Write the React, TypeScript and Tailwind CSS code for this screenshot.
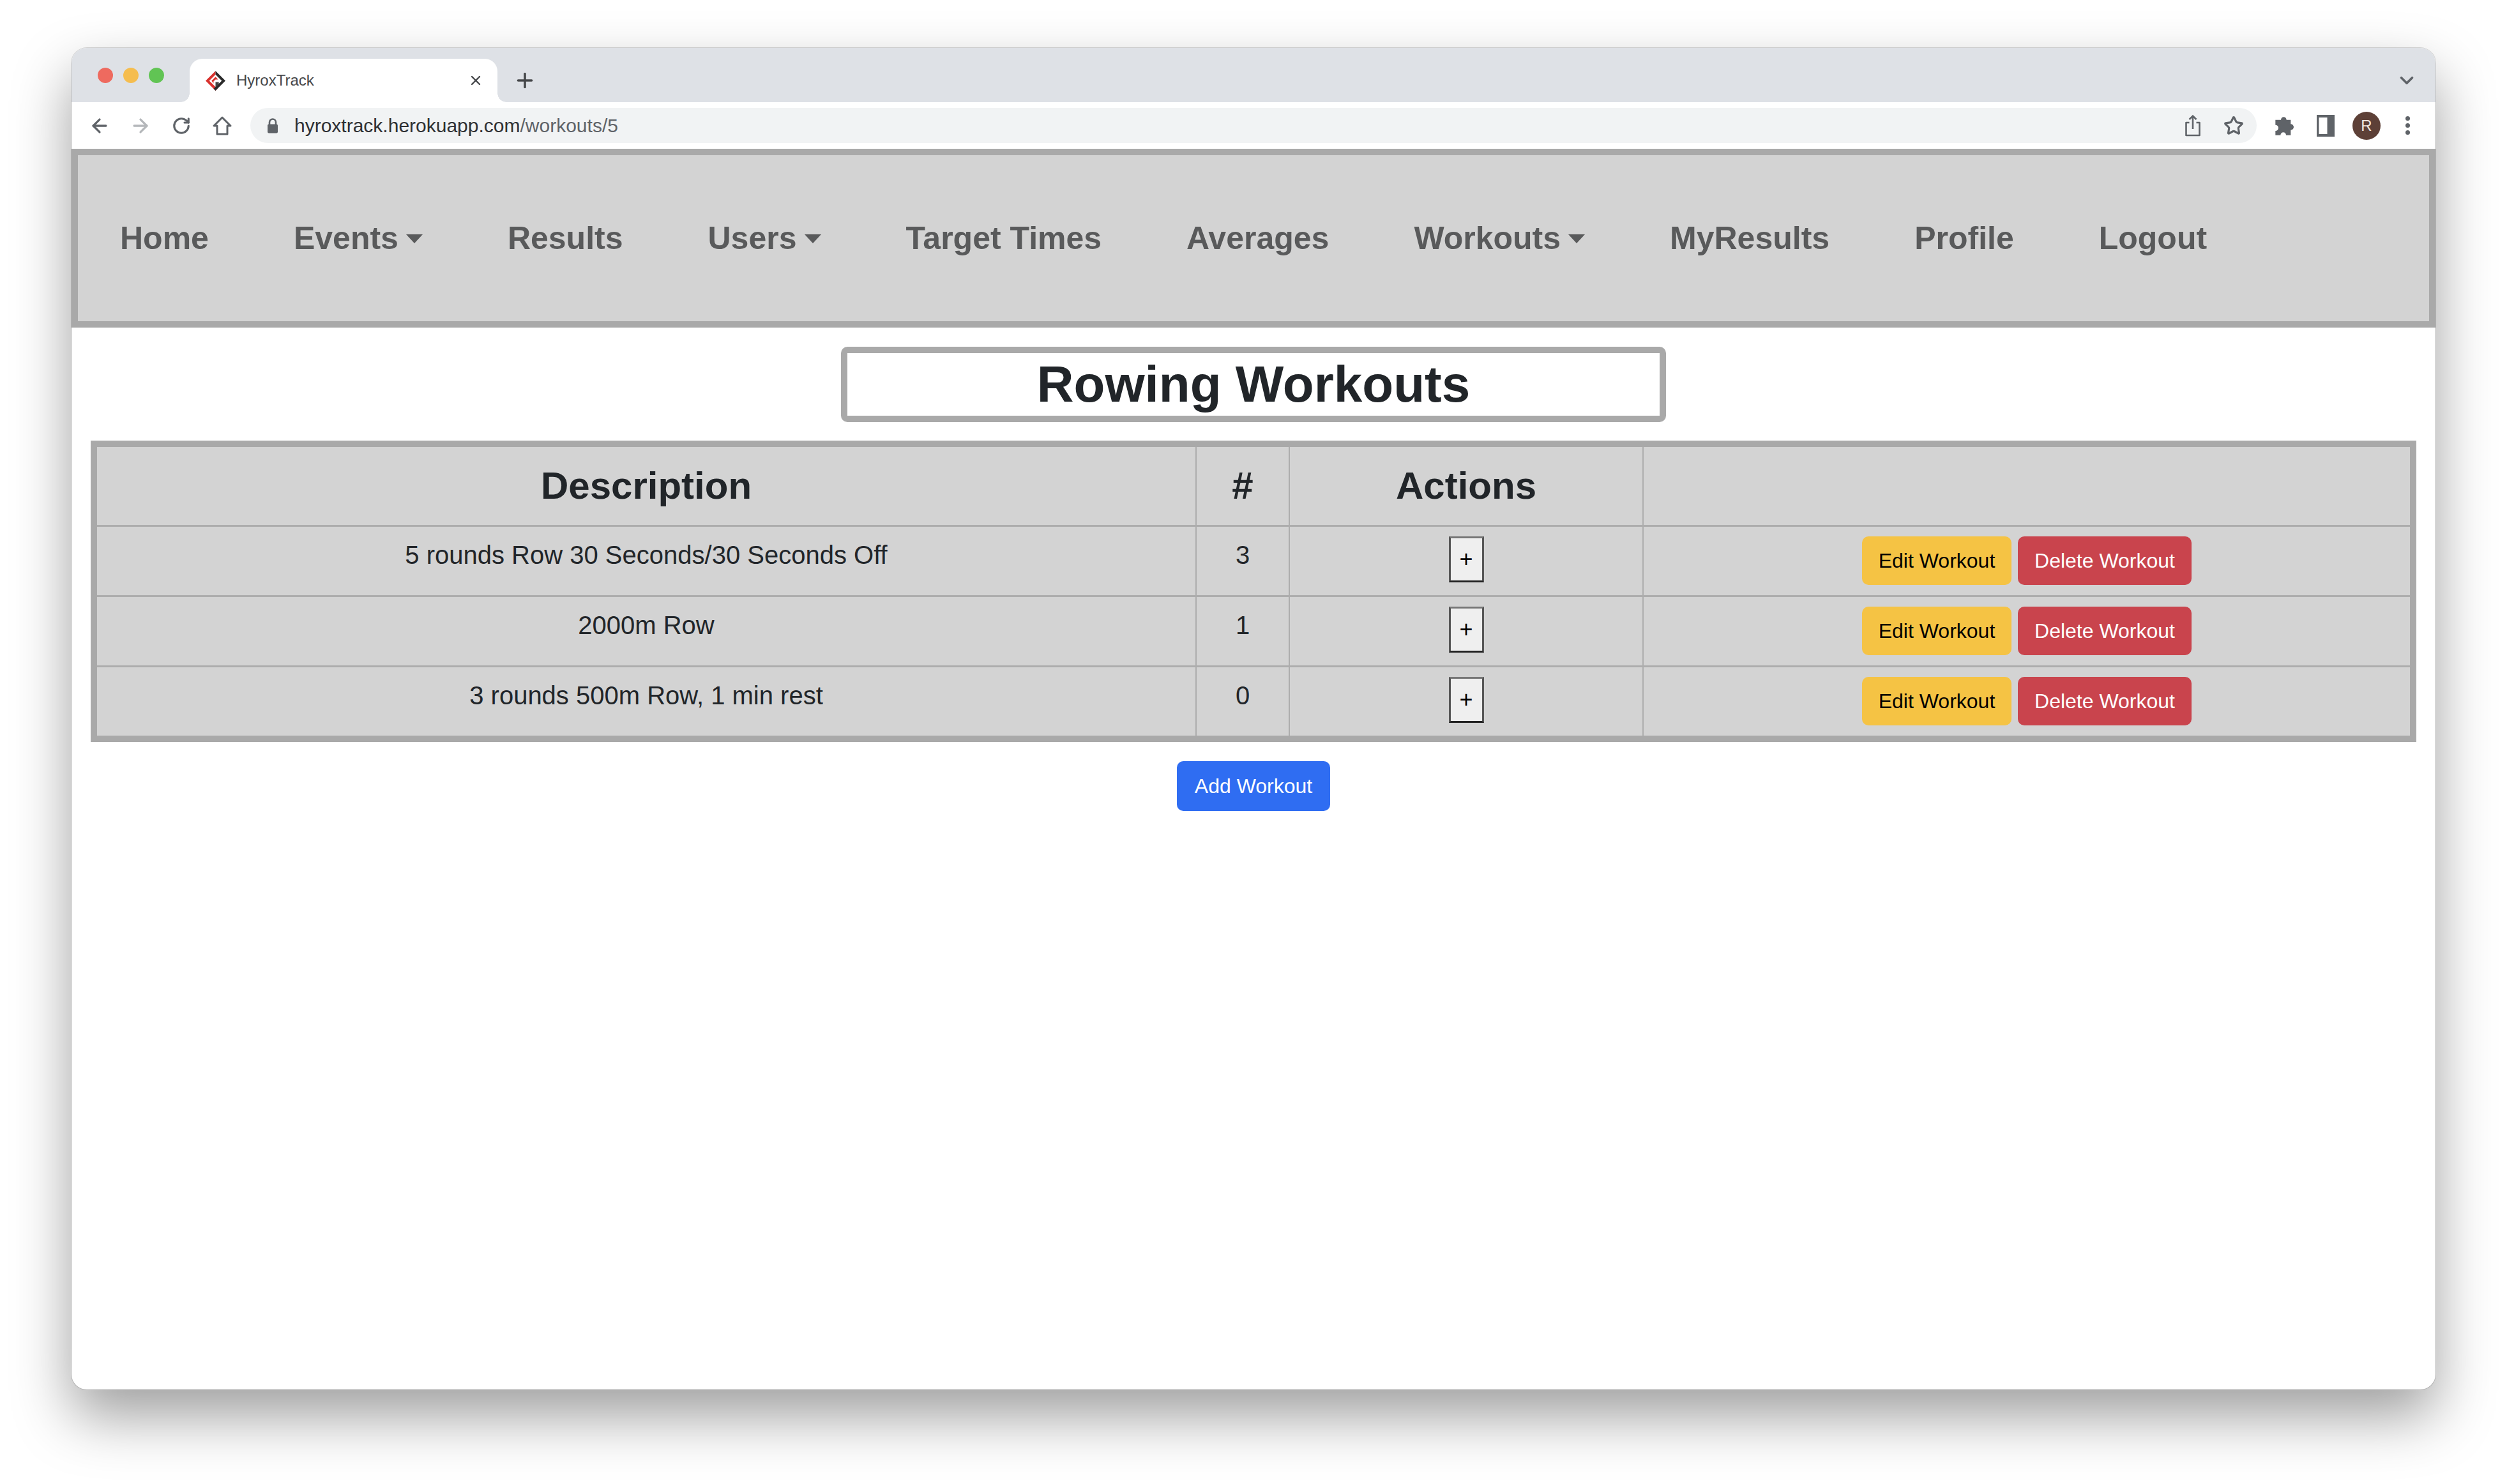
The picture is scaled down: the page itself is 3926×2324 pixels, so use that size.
import { ArrowLeft, ArrowRight, RotateCw, Plus, X, ChevronDown, Star } from "lucide-react";

const navItems = [
  { label: "Home" },
  { label: "Events", caret: true },
  { label: "Results" },
  { label: "Users", caret: true },
  { label: "Target Times" },
  { label: "Averages" },
  { label: "Workouts", caret: true },
  { label: "MyResults" },
  { label: "Profile" },
  { label: "Logout" },
];

const workouts = [
  { description: "5 rounds Row 30 Seconds/30 Seconds Off", count: 3 },
  { description: "2000m Row", count: 1 },
  { description: "3 rounds 500m Row, 1 min rest", count: 0 },
];

const Logo = () => (
  <svg width="33" height="33" viewBox="0 0 32 32" className="shrink-0">
    <path d="M16 1 L1 16 L16 31 L19 28 L6.5 16 L16 6.5 Z" fill="#d9322e" />
    <path d="M16 1 L31 16 L16 31 L13 28 L25.5 16 L16 6.5 Z" fill="#2b2b2b" />
    <path d="M10 16 L16 10 L20 14 L16 14 L13 17 L13 20 Z" fill="#d9322e" />
    <path d="M16 18 L21 18 L21 21 L16 26 Z" fill="#444" />
  </svg>
);

const ToolbarIcon = ({ children }: { children: React.ReactNode }) => (
  <div className="flex h-10 w-10 shrink-0 items-center justify-center">{children}</div>
);

const App = () => {
  return (
    <div className="min-h-[2324px] w-[3926px] bg-white px-[112px] pb-[148px] pt-[75px] text-[#212529] [font-family:'Liberation_Sans',sans-serif]">
      <div className="h-[2101px] overflow-hidden rounded-[24px] bg-white shadow-[0_42px_90px_rgba(0,0,0,0.38),0_0_0_1px_rgba(0,0,0,0.14)]">
        {/* Tab strip */}
        <div className="flex h-[85px] items-end bg-[#dee1e6] pl-[41px] pr-[28px]">
          <div className="mb-[30px] flex gap-4 self-end">
            <span className="h-6 w-6 rounded-full bg-[#ee6a5f]" />
            <span className="h-6 w-6 rounded-full bg-[#f5bd4f]" />
            <span className="h-6 w-6 rounded-full bg-[#61c454]" />
          </div>
          <div className="relative ml-[40px] flex h-[68px] w-[482px] items-center rounded-t-[20px] bg-white pl-[24px] pr-[22px]">
            <span className="absolute bottom-0 left-[-14px] h-[14px] w-[14px] bg-[radial-gradient(circle_at_0_0,transparent_13.5px,white_14px)]" />
            <span className="absolute bottom-0 right-[-14px] h-[14px] w-[14px] bg-[radial-gradient(circle_at_100%_0,transparent_13.5px,white_14px)]" />
            <Logo />
            <span className="ml-[16px] text-[24px] text-[#45474a]">HyroxTrack</span>
            <X className="ml-auto text-[#45474a]" size={24} strokeWidth={2.4} />
          </div>
          <Plus className="mb-[16px] ml-[25px] text-[#45474a]" size={36} strokeWidth={2.4} />
          <ChevronDown className="mb-[17px] ml-auto text-[#5f6368]" size={34} strokeWidth={2.6} />
        </div>

        {/* Address bar */}
        <div className="flex h-[73px] items-center gap-6 bg-white pl-[24px] pr-6">
          <ToolbarIcon>
            <ArrowLeft className="text-[#5f6368]" size={34} strokeWidth={2.3} />
          </ToolbarIcon>
          <ToolbarIcon>
            <ArrowRight className="text-[#b4b7ba]" size={34} strokeWidth={2.3} />
          </ToolbarIcon>
          <ToolbarIcon>
            <RotateCw className="text-[#5f6368]" size={30} strokeWidth={2.5} />
          </ToolbarIcon>
          <ToolbarIcon>
            <svg width="34" height="34" viewBox="0 0 34 34" fill="none" stroke="#5f6368" strokeWidth="3">
              <path d="M17 4 L4 17 H9 V30 H25 V17 H30 Z" strokeLinejoin="round" />
            </svg>
          </ToolbarIcon>
          <div className="flex h-[55px] min-w-0 flex-1 items-center rounded-full bg-[#f1f3f4] pl-[25px] pr-4">
            <svg width="20" height="26" viewBox="0 0 20 26" className="shrink-0">
              <path d="M5 11 V7.5 a5 5 0 0 1 10 0 V11" fill="none" stroke="#5f6368" strokeWidth="2.6" />
              <rect x="2" y="10.5" width="16" height="14" rx="2" fill="#5f6368" />
            </svg>
            <span className="ml-[24px] text-[30px] text-[#2f3033]">
              hyroxtrack.herokuapp.com<span className="text-[#5f6368]">/workouts/5</span>
            </span>
            <div className="ml-auto flex items-center gap-6">
              <ToolbarIcon>
                <svg width="28" height="36" viewBox="0 0 28 36" fill="none" stroke="#5f6368" strokeWidth="2.6">
                  <path d="M8.5 13 H3.5 V33 H24.5 V13 H19.5" strokeLinejoin="round" />
                  <path d="M14 23 V3 M8.5 8 L14 2.5 L19.5 8" />
                </svg>
              </ToolbarIcon>
              <ToolbarIcon>
                <Star className="text-[#5f6368]" size={32} strokeWidth={2.4} />
              </ToolbarIcon>
            </div>
          </div>
          <ToolbarIcon>
            <svg width="32" height="32" viewBox="0 0 24 24" fill="#5f6368">
              <path d="M1 5 H7.5 A3.2 3.2 0 0 1 14 5 H19 V10 A3.2 3.2 0 0 1 19 17 V23 H13.5 A3.2 3.2 0 0 0 7 23 H1 V18 A3.2 3.2 0 0 0 1 11 Z" />
            </svg>
          </ToolbarIcon>
          <ToolbarIcon>
            <svg width="28" height="34" viewBox="0 0 28 34">
              <rect width="28" height="34" fill="#5f6368" />
              <rect x="3.5" y="4" width="13" height="26" fill="white" />
            </svg>
          </ToolbarIcon>
          <ToolbarIcon>
            <span className="flex h-[44px] w-[44px] shrink-0 items-center justify-center rounded-full bg-[#5d4037] text-[24px] text-[#f0e6e0]">
              R
            </span>
          </ToolbarIcon>
          <ToolbarIcon>
            <div className="flex flex-col gap-[4px]">
              <span className="h-[7px] w-[7px] rounded-full bg-[#5f6368]" />
              <span className="h-[7px] w-[7px] rounded-full bg-[#5f6368]" />
              <span className="h-[7px] w-[7px] rounded-full bg-[#5f6368]" />
            </div>
          </ToolbarIcon>
        </div>

        {/* Site nav */}
        <nav className="flex h-[280px] items-center gap-[133px] border-[10px] border-[#a9a9a9] bg-[#d3d3d3] pl-[66px] text-[50px] font-bold text-[#595a5b]">
          {navItems.map((item) => (
            <a key={item.label} className="flex items-center whitespace-nowrap">
              {item.label}
              {item.caret && (
                <span className="ml-[12px] mt-[2px] h-0 w-0 border-x-[13px] border-t-[14px] border-x-transparent border-t-[#595a5b]" />
              )}
            </a>
          ))}
        </nav>

        {/* Page */}
        <div className="flex flex-col items-center px-[30px] pt-[30px]">
          <h1 className="flex h-[118px] w-[1292px] items-center justify-center rounded-[10px] border-[10px] border-[#a9a9a9] text-[80px] font-bold">
            Rowing Workouts
          </h1>

          <table className="mt-[29px] w-full table-fixed border-collapse border-[10px] border-[#a9a9a9] bg-[#d3d3d3]">
            <colgroup>
              <col className="w-[1726px]" />
              <col className="w-[146px]" />
              <col className="w-[554px]" />
              <col />
            </colgroup>
            <thead>
              <tr className="h-[128px] border-b-[3px] border-[#adadad] text-[60px] font-bold">
                <th className="border-r-[2px] border-[#adadad]">Description</th>
                <th className="border-r-[2px] border-[#adadad]">#</th>
                <th className="border-r-[2px] border-[#adadad]">Actions</th>
                <th />
              </tr>
            </thead>
            <tbody className="text-center text-[40px]">
              {workouts.map((workout, i) => (
                <tr key={workout.description} className={i < 2 ? "h-[110px] border-b-[3px] border-[#adadad]" : "h-[114px]"}>
                  <td className="border-r-[2px] border-[#adadad] pt-[14px] align-top leading-[60px]">{workout.description}</td>
                  <td className="border-r-[2px] border-[#adadad] pt-[14px] align-top leading-[60px]">{workout.count}</td>
                  <td className="border-r-[2px] border-[#adadad] pt-[15px] align-top">
                    <button className="mx-auto flex h-[72px] w-[55px] items-center justify-center border-[3px] border-x-[#555] border-b-[#222] border-t-[#767676] bg-[#efefef] text-[36px] text-black">
                      +
                    </button>
                  </td>
                  <td className="pt-[15px] align-top">
                    <div className="flex justify-center gap-[10px] text-[32px]">
                      <button className="h-[76px] w-[234px] rounded-[10px] bg-[#f5c344] text-black">Edit Workout</button>
                      <button className="h-[76px] w-[272px] rounded-[10px] bg-[#c9444d] text-white">Delete Workout</button>
                    </div>
                  </td>
                </tr>
              ))}
            </tbody>
          </table>

          <button className="mt-[30px] h-[78px] w-[240px] rounded-[10px] bg-[#2f6df2] text-[32px] text-white">Add Workout</button>
        </div>
      </div>
    </div>
  );
};

export default App;
